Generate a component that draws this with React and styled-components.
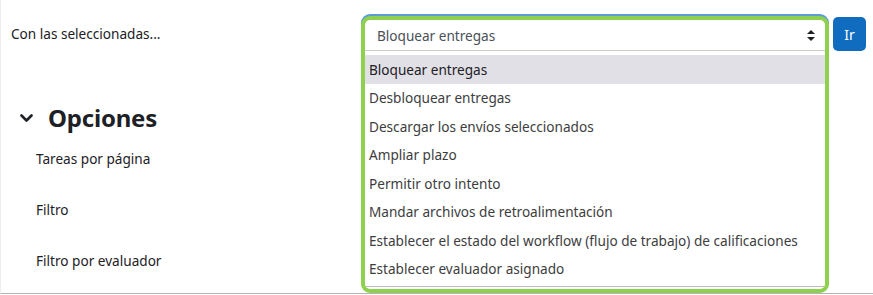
import React from "react";
import styled, { createGlobalStyle } from "styled-components";

const Global = createGlobalStyle`
  html, body { margin: 0; padding: 0; background: #ffffff; }
  body { font-family: "Noto Sans", "Open Sans", sans-serif; color: #1d2125; }
`;

const Page = styled.div`
  box-sizing: border-box;
  width: 873px;
  height: 294px;
  padding: 16px 0 0 10px;
  display: flex;
  background: #fff;
  border-left: 1px solid #eeeeee;
  border-bottom: 1px solid #b4b4b4;
  box-shadow: 0 1px 1px rgba(0, 0, 0, 0.12);
`;

const LeftCol = styled.div`
  width: 350px;
  display: flex;
  flex-direction: column;
`;

const TopLabel = styled.div`
  height: 34px;
  display: flex;
  align-items: center;
  font-size: 13.6px;
`;

const SectionHead = styled.div`
  margin-top: 53px;
  height: 30px;
  display: flex;
  align-items: center;
  gap: 15px;
  padding-left: 9px;
`;

const HeadTitle = styled.h3`
  margin: 0;
  font-size: 24px;
  font-weight: 700;
  line-height: 30px;
  letter-spacing: -0.2px;
`;

const FieldRow = styled.div`
  height: 51px;
  display: flex;
  align-items: center;
  padding-left: 25px;
  font-size: 13.6px;
`;

const RightGroup = styled.div`
  display: flex;
  align-items: flex-start;
  gap: 4px;
`;

const Frame = styled.div`
  box-sizing: border-box;
  width: 468px;
  height: 277px;
  border: 4px solid #8ed14f;
  border-radius: 9px;
  box-shadow: 0 -2px 0 #5d9bd9;
  background: #fff;
  display: flex;
  flex-direction: column;
  overflow: hidden;
`;

const SelectBox = styled.div`
  height: 30px;
  display: flex;
  align-items: center;
  justify-content: space-between;
  padding: 0 10px 0 12px;
  font-size: 13.6px;
  color: #495057;
`;

const OptionList = styled.div`
  border-top: 1px solid #cfcfcf;
  border-bottom: 1px solid #bdbdbd;
  padding: 4px 0 3px;
  margin-bottom: 2px;
  display: flex;
  flex-direction: column;
`;

const Option = styled.div`
  height: 28.5px;
  display: flex;
  align-items: center;
  padding-left: 4px;
  font-size: 13.6px;
  color: ${(p) => (p.$active ? "#1d2125" : "#3d3d3d")};
  background: ${(p) => (p.$active ? "#e0e0e6" : "transparent")};
`;

const GoButton = styled.button`
  margin-top: 1px;
  width: 33px;
  height: 34px;
  border: none;
  border-radius: 5px;
  background: #0f6cbf;
  color: #fff;
  font-family: "Noto Sans", sans-serif;
  font-size: 14px;
  padding: 0;
`;

const Chevron = () => (
  <svg width="13" height="9" viewBox="0 0 13 9">
    <polyline points="1.5,1.5 6.5,6.5 11.5,1.5" fill="none" stroke="#1d2125" strokeWidth="2.6" strokeLinecap="round" strokeLinejoin="round" />
  </svg>
);

const SortIcon = () => (
  <svg width="8" height="11" viewBox="0 0 8 11">
    <polygon points="4,0 8,4 0,4" fill="#1d2125" />
    <polygon points="0,7 8,7 4,11" fill="#1d2125" />
  </svg>
);

const options = [
  "Bloquear entregas",
  "Desbloquear entregas",
  "Descargar los envíos seleccionados",
  "Ampliar plazo",
  "Permitir otro intento",
  "Mandar archivos de retroalimentación",
  "Establecer el estado del workflow (flujo de trabajo) de calificaciones",
  "Establecer evaluador asignado",
];

export default function App() {
  return (
    <>
      <Global />
      <Page>
        <LeftCol>
          <TopLabel>Con las seleccionadas...</TopLabel>
          <SectionHead>
            <Chevron />
            <HeadTitle>Opciones</HeadTitle>
          </SectionHead>
          <FieldRow>Tareas por página</FieldRow>
          <FieldRow>Filtro</FieldRow>
          <FieldRow>Filtro por evaluador</FieldRow>
        </LeftCol>
        <RightGroup>
          <Frame>
            <SelectBox>
              <span>Bloquear entregas</span>
              <SortIcon />
            </SelectBox>
            <OptionList>
              {options.map((o, i) => (
                <Option key={o} $active={i === 0}>{o}</Option>
              ))}
            </OptionList>
          </Frame>
          <GoButton>Ir</GoButton>
        </RightGroup>
      </Page>
    </>
  );
}
